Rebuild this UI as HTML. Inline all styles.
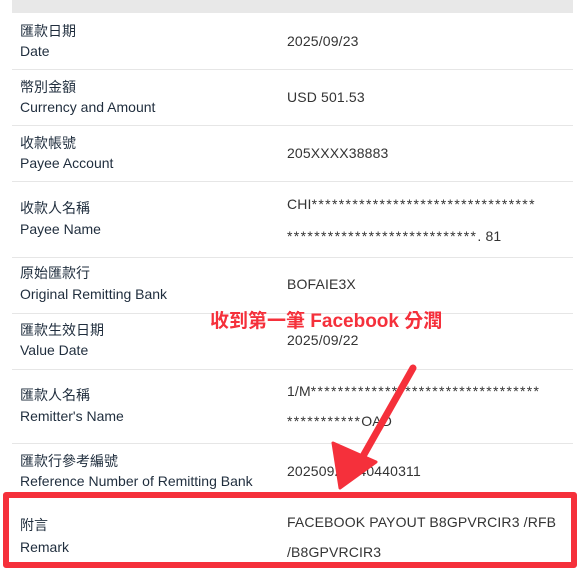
<!DOCTYPE html>
<html><head><meta charset="utf-8"><style>
body{margin:0;width:585px;height:569px;background:#fff;overflow:hidden;position:relative;font-family:"Liberation Sans","Noto Sans CJK TC",sans-serif;}
.t{position:absolute;font-size:14px;white-space:nowrap;line-height:16px}
.l{color:#1f2d3d;left:20px}
.v{color:#333;left:287px;letter-spacing:0.15px}
.sep{position:absolute;left:12px;width:561px;height:1px;background:#e6e6e6}
</style></head><body>
<div style="position:absolute;left:12px;top:0;width:561px;height:13px;background:#e8e8e8"></div>

<div class="t l" style="top:23px">匯款日期</div><div class="t l" style="top:43px">Date</div><div class="t v" style="top:33px">2025/09/23</div>
<div class="sep" style="top:69px"></div>
<div class="t l" style="top:79px">幣別金額</div><div class="t l" style="top:99px">Currency and Amount</div><div class="t v" style="top:89px">USD 501.53</div>
<div class="sep" style="top:125px"></div>
<div class="t l" style="top:135px">收款帳號</div><div class="t l" style="top:155px">Payee Account</div><div class="t v" style="top:145px">205XXXX38883</div>
<div class="sep" style="top:181px"></div>
<div class="t l" style="top:200px">收款人名稱</div><div class="t l" style="top:221px">Payee Name</div>
<div class="t v" style="top:196px">CHI<span style="letter-spacing:1.35px">*********************************</span></div>
<div class="t v" style="top:228px"><span style="letter-spacing:1.35px">****************************</span>. 81</div>
<div class="sep" style="top:257px"></div>
<div class="t l" style="top:265px">原始匯款行</div><div class="t l" style="top:286px">Original Remitting Bank</div><div class="t v" style="top:276px">BOFAIE3X</div>
<div class="sep" style="top:313px"></div>
<div class="t l" style="top:322px">匯款生效日期</div><div class="t l" style="top:342px">Value Date</div><div class="t v" style="top:332px">2025/09/22</div>
<div class="sep" style="top:369px"></div>
<div class="t l" style="top:387px">匯款人名稱</div><div class="t l" style="top:408px">Remitter's Name</div>
<div class="t v" style="top:383px">1/M<span style="letter-spacing:1.3px">**********************************</span></div>
<div class="t v" style="top:413px"><span style="letter-spacing:1.3px">***********</span>OAD</div>
<div class="sep" style="top:443px"></div>
<div class="t l" style="top:453px">匯款行參考編號</div><div class="t l" style="top:473px">Reference Number of Remitting Bank</div><div class="t v" style="top:463px">20250923040440311</div>

<div class="t l" style="top:517px">附言</div><div class="t l" style="top:539px">Remark</div>
<div class="t v" style="top:514px">FACEBOOK PAYOUT B8GPVRCIR3 /RFB</div>
<div class="t v" style="top:544px">/B8GPVRCIR3</div>

<div style="position:absolute;left:3px;top:492px;width:562px;height:64px;border:6px solid #f5303b;border-radius:3px"></div>

<div class="t" style="left:210px;top:311px;font-size:19px;line-height:21px;font-weight:bold;color:#f5303b">收到第一筆 Facebook 分潤</div>

<svg style="position:absolute;left:0;top:0" width="585" height="569">
<line x1="413" y1="368" x2="362" y2="458" stroke="#f5303b" stroke-width="7" stroke-linecap="round"/>
<polygon points="340,488 333,443 376,462" fill="#f5303b" stroke="#f5303b" stroke-width="3" stroke-linejoin="round"/>
</svg>
</body></html>
